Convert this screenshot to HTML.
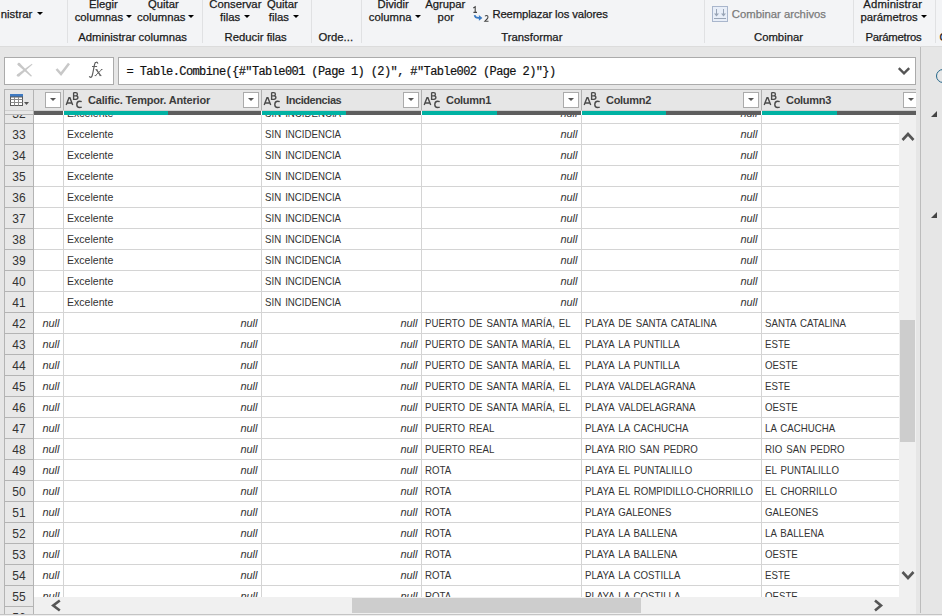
<!DOCTYPE html>
<html><head><meta charset="utf-8"><style>
html,body{margin:0;padding:0;}
body{width:942px;height:616px;overflow:hidden;position:relative;background:#e6e6e6;font-family:'Liberation Sans', sans-serif;}
body div, body svg{position:absolute;}
.t{white-space:nowrap;}
</style></head><body>
<div style="left:0px;top:0px;width:942px;height:46px;background:#f3f4f6;"></div><div style="left:0px;top:46px;width:942px;height:1px;background:#dcdcdc;"></div><div style="left:67px;top:0px;width:1px;height:43px;background:#e0e1e3;"></div><div style="left:202px;top:0px;width:1px;height:43px;background:#e0e1e3;"></div><div style="left:311px;top:0px;width:1px;height:43px;background:#e0e1e3;"></div><div style="left:361px;top:0px;width:1px;height:43px;background:#e0e1e3;"></div><div style="left:704px;top:0px;width:1px;height:43px;background:#e0e1e3;"></div><div style="left:853px;top:0px;width:1px;height:43px;background:#e0e1e3;"></div><div style="left:935px;top:0px;width:1px;height:43px;background:#e0e1e3;"></div><div class="t" style="left:0.8px;top:7.58px;font-size:11.3px;line-height:13px;color:#1a1a1a;font-weight:normal;font-style:normal;letter-spacing:0px;font-family:'Liberation Sans', sans-serif;-webkit-text-stroke:0.25px currentColor;">nistrar</div><div style="left:36.5px;top:12px;width:0;height:0;border-left:3.0px solid transparent;border-right:3.0px solid transparent;border-top:3px solid #000;"></div><div class="t" style="left:89px;top:-1.92px;font-size:11.3px;line-height:13px;color:#1a1a1a;font-weight:normal;font-style:normal;letter-spacing:0px;font-family:'Liberation Sans', sans-serif;-webkit-text-stroke:0.25px currentColor;">Elegir</div><div class="t" style="left:74.7px;top:11.08px;font-size:11.3px;line-height:13px;color:#1a1a1a;font-weight:normal;font-style:normal;letter-spacing:0px;font-family:'Liberation Sans', sans-serif;-webkit-text-stroke:0.25px currentColor;">columnas</div><div style="left:126px;top:15px;width:0;height:0;border-left:3.0px solid transparent;border-right:3.0px solid transparent;border-top:3px solid #000;"></div><div class="t" style="left:148px;top:-1.92px;font-size:11.3px;line-height:13px;color:#1a1a1a;font-weight:normal;font-style:normal;letter-spacing:0px;font-family:'Liberation Sans', sans-serif;-webkit-text-stroke:0.25px currentColor;">Quitar</div><div class="t" style="left:137px;top:11.08px;font-size:11.3px;line-height:13px;color:#1a1a1a;font-weight:normal;font-style:normal;letter-spacing:0px;font-family:'Liberation Sans', sans-serif;-webkit-text-stroke:0.25px currentColor;">columnas</div><div style="left:187.5px;top:15px;width:0;height:0;border-left:3.0px solid transparent;border-right:3.0px solid transparent;border-top:3px solid #000;"></div><div class="t" style="left:78.3px;top:31.08px;font-size:11.3px;line-height:13px;color:#1a1a1a;font-weight:normal;font-style:normal;letter-spacing:0px;font-family:'Liberation Sans', sans-serif;-webkit-text-stroke:0.25px currentColor;">Administrar columnas</div><div class="t" style="left:209.3px;top:-1.92px;font-size:11.3px;line-height:13px;color:#1a1a1a;font-weight:normal;font-style:normal;letter-spacing:0px;font-family:'Liberation Sans', sans-serif;-webkit-text-stroke:0.25px currentColor;">Conservar</div><div class="t" style="left:220px;top:11.08px;font-size:11.3px;line-height:13px;color:#1a1a1a;font-weight:normal;font-style:normal;letter-spacing:0px;font-family:'Liberation Sans', sans-serif;-webkit-text-stroke:0.25px currentColor;">filas</div><div style="left:244px;top:15px;width:0;height:0;border-left:3.0px solid transparent;border-right:3.0px solid transparent;border-top:3px solid #000;"></div><div class="t" style="left:267px;top:-1.92px;font-size:11.3px;line-height:13px;color:#1a1a1a;font-weight:normal;font-style:normal;letter-spacing:0px;font-family:'Liberation Sans', sans-serif;-webkit-text-stroke:0.25px currentColor;">Quitar</div><div class="t" style="left:268.8px;top:11.08px;font-size:11.3px;line-height:13px;color:#1a1a1a;font-weight:normal;font-style:normal;letter-spacing:0px;font-family:'Liberation Sans', sans-serif;-webkit-text-stroke:0.25px currentColor;">filas</div><div style="left:293px;top:15px;width:0;height:0;border-left:3.0px solid transparent;border-right:3.0px solid transparent;border-top:3px solid #000;"></div><div class="t" style="left:224.6px;top:31.08px;font-size:11.3px;line-height:13px;color:#1a1a1a;font-weight:normal;font-style:normal;letter-spacing:0px;font-family:'Liberation Sans', sans-serif;-webkit-text-stroke:0.25px currentColor;">Reducir filas</div><div class="t" style="left:318.5px;top:31.08px;font-size:11.3px;line-height:13px;color:#1a1a1a;font-weight:normal;font-style:normal;letter-spacing:0px;font-family:'Liberation Sans', sans-serif;-webkit-text-stroke:0.25px currentColor;">Orde...</div><div class="t" style="left:377.5px;top:-1.92px;font-size:11.3px;line-height:13px;color:#1a1a1a;font-weight:normal;font-style:normal;letter-spacing:0px;font-family:'Liberation Sans', sans-serif;-webkit-text-stroke:0.25px currentColor;">Dividir</div><div class="t" style="left:368.8px;top:11.08px;font-size:11.3px;line-height:13px;color:#1a1a1a;font-weight:normal;font-style:normal;letter-spacing:0px;font-family:'Liberation Sans', sans-serif;-webkit-text-stroke:0.25px currentColor;">columna</div><div style="left:415px;top:15px;width:0;height:0;border-left:3.0px solid transparent;border-right:3.0px solid transparent;border-top:3px solid #000;"></div><div class="t" style="left:425.2px;top:-1.92px;font-size:11.3px;line-height:13px;color:#1a1a1a;font-weight:normal;font-style:normal;letter-spacing:0px;font-family:'Liberation Sans', sans-serif;-webkit-text-stroke:0.25px currentColor;">Agrupar</div><div class="t" style="left:437.6px;top:11.08px;font-size:11.3px;line-height:13px;color:#1a1a1a;font-weight:normal;font-style:normal;letter-spacing:0px;font-family:'Liberation Sans', sans-serif;-webkit-text-stroke:0.25px currentColor;">por</div><svg style="left:468px;top:2px;width:26px;height:22px" width="26" height="22" viewBox="468 2 26 22" fill="none"><path d="M473.3 8 L475.2 6.7 V12.4 M473.4 12.4 H477" stroke="#444" stroke-width="1.1"/><path d="M485 16.3 Q485.6 15.5 486.5 15.5 Q488 15.5 488 17 Q488 18.2 486.6 19.5 L484.9 21.2 H488.5" stroke="#444" stroke-width="1.05"/><path d="M474.6 15.1 Q475.1 17.9 478.3 17.9 H479.6" stroke="#3b7bc4" stroke-width="1.7"/><path d="M478.9 15 L482.4 17.9 L478.9 20.8 Z" fill="#3b7bc4"/></svg><div class="t" style="left:492.4px;top:8.18px;font-size:11.3px;line-height:13px;color:#1a1a1a;font-weight:normal;font-style:normal;letter-spacing:-0.12px;font-family:'Liberation Sans', sans-serif;-webkit-text-stroke:0.25px currentColor;">Reemplazar los valores</div><div class="t" style="left:501.3px;top:31.08px;font-size:11.3px;line-height:13px;color:#1a1a1a;font-weight:normal;font-style:normal;letter-spacing:0px;font-family:'Liberation Sans', sans-serif;-webkit-text-stroke:0.25px currentColor;">Transformar</div><svg style="left:712px;top:6px;width:16px;height:16px" width="16" height="16" viewBox="0 0 16 16"><rect x="0.5" y="0.5" width="15" height="15" fill="#e8eef8" stroke="#a9b6cc"/><path d="M4.5 3 V8 M11.5 3 V8 M2 12.5 H14" stroke="#98a4b6" stroke-width="1" fill="none"/><path d="M2 7.5 H7 L4.5 10.5 Z M9 7.5 H14 L11.5 10.5 Z" fill="#98a4b6"/></svg><div class="t" style="left:731.8px;top:8.18px;font-size:11.3px;line-height:13px;color:#7a7a7a;font-weight:normal;font-style:normal;letter-spacing:0px;font-family:'Liberation Sans', sans-serif;-webkit-text-stroke:0.25px currentColor;">Combinar archivos</div><div class="t" style="left:754px;top:31.08px;font-size:11.3px;line-height:13px;color:#1a1a1a;font-weight:normal;font-style:normal;letter-spacing:0px;font-family:'Liberation Sans', sans-serif;-webkit-text-stroke:0.25px currentColor;">Combinar</div><div class="t" style="left:863.3px;top:-1.92px;font-size:11.3px;line-height:13px;color:#1a1a1a;font-weight:normal;font-style:normal;letter-spacing:0.15px;font-family:'Liberation Sans', sans-serif;-webkit-text-stroke:0.25px currentColor;">Administrar</div><div class="t" style="left:860.5px;top:11.08px;font-size:11.3px;line-height:13px;color:#1a1a1a;font-weight:normal;font-style:normal;letter-spacing:0px;font-family:'Liberation Sans', sans-serif;-webkit-text-stroke:0.25px currentColor;">parámetros</div><div style="left:921px;top:15px;width:0;height:0;border-left:3.0px solid transparent;border-right:3.0px solid transparent;border-top:3px solid #000;"></div><div class="t" style="left:865.5px;top:31.08px;font-size:11.3px;line-height:13px;color:#1a1a1a;font-weight:normal;font-style:normal;letter-spacing:-0.25px;font-family:'Liberation Sans', sans-serif;-webkit-text-stroke:0.25px currentColor;">Parámetros</div><div class="t" style="left:939.5px;top:31.08px;font-size:11.3px;line-height:13px;color:#1a1a1a;font-weight:normal;font-style:normal;letter-spacing:0px;font-family:'Liberation Sans', sans-serif;-webkit-text-stroke:0.25px currentColor;">C</div><div style="left:4px;top:57px;width:110px;height:28px;background:#fff;box-sizing:border-box;border:1px solid #ababab;"></div><svg style="left:14px;top:60px;width:24px;height:20px" width="24" height="20" viewBox="0 0 24 20"><path d="M3.93 5.21 L5.87 3.19 L17.91 15.77 L17.09 16.63 Z" fill="#c8c8c8"/><circle cx="4.9" cy="4.2" r="1.4" fill="#c8c8c8"/><path d="M5.07 16.40 L3.33 14.20 L17.89 3.81 L18.51 4.59 Z" fill="#c8c8c8"/><circle cx="4.2" cy="15.3" r="1.4" fill="#c8c8c8"/></svg><svg style="left:54px;top:62px;width:17px;height:15px" width="17" height="15" viewBox="0 0 17 15"><path d="M2.5 7 L7 12 L15 1.5" stroke="#c8c8c8" stroke-width="2.5" fill="none"/></svg><svg style="left:84px;top:58px;width:24px;height:24px" width="24" height="24" viewBox="84 58 24 24" fill="none" stroke="#5c5c5c"><path d="M97.9 63.6 Q97.4 61.9 96.3 62.1 Q95.0 62.3 94.5 64.6 L92.7 73.6 Q92.1 77.3 90.6 77.3 Q89.7 77.3 89.3 76.3" stroke-width="1.15"/><path d="M92 66.5 H97.1" stroke-width="0.95"/><path d="M96.4 69.6 L100.6 75.6" stroke-width="1.35"/><path d="M101.8 69.5 L95.4 75.6" stroke-width="0.9"/><path d="M95.4 69.6 H97.4 M99.5 75.6 H101.5 M94.6 75.6 H96.4 M100.9 69.5 H102.5" stroke-width="0.8"/></svg><div style="left:118px;top:57px;width:798px;height:28px;background:#fff;box-sizing:border-box;border:1px solid #ababab;"></div><div class="t" style="left:126.5px;top:65.74px;font-size:12px;line-height:13px;color:#111;font-weight:normal;font-style:normal;letter-spacing:-0.6px;font-family:'Liberation Mono', monospace;-webkit-text-stroke:0.2px currentColor;">= Table.Combine({#"Table001 (Page 1) (2)", #"Table002 (Page 2)"})</div><svg style="left:897px;top:66px;width:14px;height:10px" width="14" height="10" viewBox="0 0 14 10"><path d="M1.8 2.2 L7 7.4 L12.2 2.2" stroke="#555" stroke-width="2.4" fill="none"/></svg><div style="left:916px;top:47px;width:4px;height:569px;background:#e6e6e6;"></div><div style="left:920px;top:47px;width:1px;height:566px;background:#bcbcbc;"></div><div style="left:921px;top:47px;width:21px;height:569px;background:#e6e6e6;"></div><div style="left:936px;top:69px;width:14px;height:14px;box-sizing:border-box;border:1.6px solid #24668a;border-radius:50%"></div><svg style="left:930px;top:110px;width:8px;height:8px" width="8" height="8" viewBox="0 0 8 8"><path d="M7 1 V7 H1 Z" fill="#444"/></svg><svg style="left:930px;top:211px;width:8px;height:8px" width="8" height="8" viewBox="0 0 8 8"><path d="M7 1 V7 H1 Z" fill="#444"/></svg><div style="left:4px;top:89px;width:912px;height:525px;background:#ffffff;"></div><div style="left:5px;top:90px;width:911px;height:20px;background:#e6e6e6;"></div><div style="left:4px;top:89px;width:912px;height:1px;background:#b4b4b4;"></div><div style="left:4px;top:89px;width:1px;height:525px;background:#b4b4b4;"></div><div style="left:5px;top:110px;width:911px;height:1px;background:#cfcfcf;"></div><div style="left:5px;top:111px;width:28px;height:503px;background:#e8e8e8;"></div><div style="left:33px;top:89px;width:1px;height:525px;background:#b4b4b4;"></div><div style="left:63px;top:90px;width:1px;height:20px;background:#b0b0b0;"></div><div style="left:261px;top:90px;width:1px;height:20px;background:#b0b0b0;"></div><div style="left:421px;top:90px;width:1px;height:20px;background:#b0b0b0;"></div><div style="left:581px;top:90px;width:1px;height:20px;background:#b0b0b0;"></div><div style="left:761px;top:90px;width:1px;height:20px;background:#b0b0b0;"></div><div style="left:34px;top:111px;width:29px;height:4px;background:#5e5e5e;"></div><div style="left:64px;top:111px;width:104px;height:4px;background:#00b2a3;"></div><div style="left:168px;top:111px;width:93px;height:4px;background:#5e5e5e;"></div><div style="left:262px;top:111px;width:84px;height:4px;background:#00b2a3;"></div><div style="left:346px;top:111px;width:75px;height:4px;background:#5e5e5e;"></div><div style="left:422px;top:111px;width:75px;height:4px;background:#00b2a3;"></div><div style="left:497px;top:111px;width:84px;height:4px;background:#5e5e5e;"></div><div style="left:582px;top:111px;width:84px;height:4px;background:#00b2a3;"></div><div style="left:666px;top:111px;width:95px;height:4px;background:#5e5e5e;"></div><div style="left:762px;top:111px;width:75px;height:4px;background:#00b2a3;"></div><div style="left:837px;top:111px;width:79px;height:4px;background:#5e5e5e;"></div><div style="left:5px;top:114px;width:28px;height:1px;background:#b4b4b4;"></div><svg style="left:10px;top:94px;width:20px;height:12px" width="20" height="12" viewBox="0 0 20 12"><rect x="0" y="0" width="13" height="3" fill="#3f7ac2"/><rect x="0.5" y="3" width="12" height="8.5" fill="#fff" stroke="#5a5a5a" stroke-width="1"/><path d="M4.5 3 V11.5 M8.5 3 V11.5 M0.5 5.5 H12.5 M0.5 8.5 H12.5" stroke="#8a8a8a" stroke-width="1"/><path d="M14 8 L19 8 L16.5 11 Z" fill="#555"/></svg><div style="left:45px;top:92px;width:16px;height:16px;box-sizing:border-box;border:1px solid #ababab;background:#fff"></div><div style="left:50px;top:98px;width:0;height:0;border-left:3.5px solid transparent;border-right:3.5px solid transparent;border-top:3.5px solid #555;"></div><svg style="left:63px;top:90px;width:20px;height:19px" width="20" height="19" viewBox="0 0 20 19"><path d="M3.2 14.9 L6 7.8 H6.9 L9.7 14.9 M4.4 13 H8.5" stroke="#4a4a4a" stroke-width="1.4" fill="none"/><path d="M10.6 2.6 V9.3 H12.9 Q14.9 9.3 14.9 7.5 Q14.9 5.9 12.9 5.9 H10.6 M10.6 2.6 H12.7 Q14.4 2.6 14.4 4.2 Q14.4 5.9 12.7 5.9" stroke="#4a4a4a" stroke-width="1.35" fill="none"/><path d="M18.7 11.6 Q17.9 11.2 16.6 11.2 Q13.8 11.2 13.8 14.4 Q13.8 17.5 16.6 17.5 Q17.9 17.5 18.7 17.1" stroke="#4a4a4a" stroke-width="1.4" fill="none"/></svg><div class="t" style="left:88px;top:93.69px;font-size:11px;line-height:13px;color:#3c3c3c;font-weight:bold;font-style:normal;letter-spacing:-0.18px;font-family:'Liberation Sans', sans-serif;">Calific. Tempor. Anterior</div><div style="left:243px;top:92px;width:16px;height:16px;box-sizing:border-box;border:1px solid #ababab;background:#fff"></div><div style="left:248px;top:98px;width:0;height:0;border-left:3.5px solid transparent;border-right:3.5px solid transparent;border-top:3.5px solid #555;"></div><svg style="left:261px;top:90px;width:20px;height:19px" width="20" height="19" viewBox="0 0 20 19"><path d="M3.2 14.9 L6 7.8 H6.9 L9.7 14.9 M4.4 13 H8.5" stroke="#4a4a4a" stroke-width="1.4" fill="none"/><path d="M10.6 2.6 V9.3 H12.9 Q14.9 9.3 14.9 7.5 Q14.9 5.9 12.9 5.9 H10.6 M10.6 2.6 H12.7 Q14.4 2.6 14.4 4.2 Q14.4 5.9 12.7 5.9" stroke="#4a4a4a" stroke-width="1.35" fill="none"/><path d="M18.7 11.6 Q17.9 11.2 16.6 11.2 Q13.8 11.2 13.8 14.4 Q13.8 17.5 16.6 17.5 Q17.9 17.5 18.7 17.1" stroke="#4a4a4a" stroke-width="1.4" fill="none"/></svg><div class="t" style="left:286px;top:93.69px;font-size:11px;line-height:13px;color:#3c3c3c;font-weight:bold;font-style:normal;letter-spacing:-0.42px;font-family:'Liberation Sans', sans-serif;">Incidencias</div><div style="left:403px;top:92px;width:16px;height:16px;box-sizing:border-box;border:1px solid #ababab;background:#fff"></div><div style="left:408px;top:98px;width:0;height:0;border-left:3.5px solid transparent;border-right:3.5px solid transparent;border-top:3.5px solid #555;"></div><svg style="left:421px;top:90px;width:20px;height:19px" width="20" height="19" viewBox="0 0 20 19"><path d="M3.2 14.9 L6 7.8 H6.9 L9.7 14.9 M4.4 13 H8.5" stroke="#4a4a4a" stroke-width="1.4" fill="none"/><path d="M10.6 2.6 V9.3 H12.9 Q14.9 9.3 14.9 7.5 Q14.9 5.9 12.9 5.9 H10.6 M10.6 2.6 H12.7 Q14.4 2.6 14.4 4.2 Q14.4 5.9 12.7 5.9" stroke="#4a4a4a" stroke-width="1.35" fill="none"/><path d="M18.7 11.6 Q17.9 11.2 16.6 11.2 Q13.8 11.2 13.8 14.4 Q13.8 17.5 16.6 17.5 Q17.9 17.5 18.7 17.1" stroke="#4a4a4a" stroke-width="1.4" fill="none"/></svg><div class="t" style="left:446px;top:93.69px;font-size:11px;line-height:13px;color:#3c3c3c;font-weight:bold;font-style:normal;letter-spacing:-0.3px;font-family:'Liberation Sans', sans-serif;">Column1</div><div style="left:563px;top:92px;width:16px;height:16px;box-sizing:border-box;border:1px solid #ababab;background:#fff"></div><div style="left:568px;top:98px;width:0;height:0;border-left:3.5px solid transparent;border-right:3.5px solid transparent;border-top:3.5px solid #555;"></div><svg style="left:581px;top:90px;width:20px;height:19px" width="20" height="19" viewBox="0 0 20 19"><path d="M3.2 14.9 L6 7.8 H6.9 L9.7 14.9 M4.4 13 H8.5" stroke="#4a4a4a" stroke-width="1.4" fill="none"/><path d="M10.6 2.6 V9.3 H12.9 Q14.9 9.3 14.9 7.5 Q14.9 5.9 12.9 5.9 H10.6 M10.6 2.6 H12.7 Q14.4 2.6 14.4 4.2 Q14.4 5.9 12.7 5.9" stroke="#4a4a4a" stroke-width="1.35" fill="none"/><path d="M18.7 11.6 Q17.9 11.2 16.6 11.2 Q13.8 11.2 13.8 14.4 Q13.8 17.5 16.6 17.5 Q17.9 17.5 18.7 17.1" stroke="#4a4a4a" stroke-width="1.4" fill="none"/></svg><div class="t" style="left:606px;top:93.69px;font-size:11px;line-height:13px;color:#3c3c3c;font-weight:bold;font-style:normal;letter-spacing:-0.3px;font-family:'Liberation Sans', sans-serif;">Column2</div><div style="left:743px;top:92px;width:16px;height:16px;box-sizing:border-box;border:1px solid #ababab;background:#fff"></div><div style="left:748px;top:98px;width:0;height:0;border-left:3.5px solid transparent;border-right:3.5px solid transparent;border-top:3.5px solid #555;"></div><svg style="left:761px;top:90px;width:20px;height:19px" width="20" height="19" viewBox="0 0 20 19"><path d="M3.2 14.9 L6 7.8 H6.9 L9.7 14.9 M4.4 13 H8.5" stroke="#4a4a4a" stroke-width="1.4" fill="none"/><path d="M10.6 2.6 V9.3 H12.9 Q14.9 9.3 14.9 7.5 Q14.9 5.9 12.9 5.9 H10.6 M10.6 2.6 H12.7 Q14.4 2.6 14.4 4.2 Q14.4 5.9 12.7 5.9" stroke="#4a4a4a" stroke-width="1.35" fill="none"/><path d="M18.7 11.6 Q17.9 11.2 16.6 11.2 Q13.8 11.2 13.8 14.4 Q13.8 17.5 16.6 17.5 Q17.9 17.5 18.7 17.1" stroke="#4a4a4a" stroke-width="1.4" fill="none"/></svg><div class="t" style="left:786px;top:93.69px;font-size:11px;line-height:13px;color:#3c3c3c;font-weight:bold;font-style:normal;letter-spacing:-0.3px;font-family:'Liberation Sans', sans-serif;">Column3</div><div style="left:903px;top:92px;width:13px;height:16px;box-sizing:border-box;border:1px solid #ababab;border-right:none;background:#fff"></div><div style="left:908px;top:98px;width:0;height:0;border-left:3.5px solid transparent;border-right:3.5px solid transparent;border-top:3.5px solid #555;"></div><div style="left:5px;top:115px;width:28px;height:499px;overflow:hidden;background:#e8e8e8"><div style="left:0;top:-13px;width:28px;height:1px;background:#b4b4b4"></div><div class="t" style="left:0;top:-7.11px;width:28px;text-align:center;font-size:12px;line-height:13px;color:#333">32</div><div style="left:0;top:8px;width:28px;height:1px;background:#b4b4b4"></div><div class="t" style="left:0;top:13.89px;width:28px;text-align:center;font-size:12px;line-height:13px;color:#333">33</div><div style="left:0;top:29px;width:28px;height:1px;background:#b4b4b4"></div><div class="t" style="left:0;top:34.89px;width:28px;text-align:center;font-size:12px;line-height:13px;color:#333">34</div><div style="left:0;top:50px;width:28px;height:1px;background:#b4b4b4"></div><div class="t" style="left:0;top:55.89px;width:28px;text-align:center;font-size:12px;line-height:13px;color:#333">35</div><div style="left:0;top:71px;width:28px;height:1px;background:#b4b4b4"></div><div class="t" style="left:0;top:76.89px;width:28px;text-align:center;font-size:12px;line-height:13px;color:#333">36</div><div style="left:0;top:92px;width:28px;height:1px;background:#b4b4b4"></div><div class="t" style="left:0;top:97.89px;width:28px;text-align:center;font-size:12px;line-height:13px;color:#333">37</div><div style="left:0;top:113px;width:28px;height:1px;background:#b4b4b4"></div><div class="t" style="left:0;top:118.89px;width:28px;text-align:center;font-size:12px;line-height:13px;color:#333">38</div><div style="left:0;top:134px;width:28px;height:1px;background:#b4b4b4"></div><div class="t" style="left:0;top:139.89px;width:28px;text-align:center;font-size:12px;line-height:13px;color:#333">39</div><div style="left:0;top:155px;width:28px;height:1px;background:#b4b4b4"></div><div class="t" style="left:0;top:160.89px;width:28px;text-align:center;font-size:12px;line-height:13px;color:#333">40</div><div style="left:0;top:176px;width:28px;height:1px;background:#b4b4b4"></div><div class="t" style="left:0;top:181.89px;width:28px;text-align:center;font-size:12px;line-height:13px;color:#333">41</div><div style="left:0;top:197px;width:28px;height:1px;background:#b4b4b4"></div><div class="t" style="left:0;top:202.89px;width:28px;text-align:center;font-size:12px;line-height:13px;color:#333">42</div><div style="left:0;top:218px;width:28px;height:1px;background:#b4b4b4"></div><div class="t" style="left:0;top:223.89px;width:28px;text-align:center;font-size:12px;line-height:13px;color:#333">43</div><div style="left:0;top:239px;width:28px;height:1px;background:#b4b4b4"></div><div class="t" style="left:0;top:244.89px;width:28px;text-align:center;font-size:12px;line-height:13px;color:#333">44</div><div style="left:0;top:260px;width:28px;height:1px;background:#b4b4b4"></div><div class="t" style="left:0;top:265.89px;width:28px;text-align:center;font-size:12px;line-height:13px;color:#333">45</div><div style="left:0;top:281px;width:28px;height:1px;background:#b4b4b4"></div><div class="t" style="left:0;top:286.89px;width:28px;text-align:center;font-size:12px;line-height:13px;color:#333">46</div><div style="left:0;top:302px;width:28px;height:1px;background:#b4b4b4"></div><div class="t" style="left:0;top:307.89px;width:28px;text-align:center;font-size:12px;line-height:13px;color:#333">47</div><div style="left:0;top:323px;width:28px;height:1px;background:#b4b4b4"></div><div class="t" style="left:0;top:328.89px;width:28px;text-align:center;font-size:12px;line-height:13px;color:#333">48</div><div style="left:0;top:344px;width:28px;height:1px;background:#b4b4b4"></div><div class="t" style="left:0;top:349.89px;width:28px;text-align:center;font-size:12px;line-height:13px;color:#333">49</div><div style="left:0;top:365px;width:28px;height:1px;background:#b4b4b4"></div><div class="t" style="left:0;top:370.89px;width:28px;text-align:center;font-size:12px;line-height:13px;color:#333">50</div><div style="left:0;top:386px;width:28px;height:1px;background:#b4b4b4"></div><div class="t" style="left:0;top:391.89px;width:28px;text-align:center;font-size:12px;line-height:13px;color:#333">51</div><div style="left:0;top:407px;width:28px;height:1px;background:#b4b4b4"></div><div class="t" style="left:0;top:412.89px;width:28px;text-align:center;font-size:12px;line-height:13px;color:#333">52</div><div style="left:0;top:428px;width:28px;height:1px;background:#b4b4b4"></div><div class="t" style="left:0;top:433.89px;width:28px;text-align:center;font-size:12px;line-height:13px;color:#333">53</div><div style="left:0;top:449px;width:28px;height:1px;background:#b4b4b4"></div><div class="t" style="left:0;top:454.89px;width:28px;text-align:center;font-size:12px;line-height:13px;color:#333">54</div><div style="left:0;top:470px;width:28px;height:1px;background:#b4b4b4"></div><div class="t" style="left:0;top:475.89px;width:28px;text-align:center;font-size:12px;line-height:13px;color:#333">55</div><div style="left:0;top:491px;width:28px;height:1px;background:#b4b4b4"></div><div class="t" style="left:0;top:496.89px;width:28px;text-align:center;font-size:12px;line-height:13px;color:#333">56</div><div style="left:0;top:512px;width:28px;height:1px;background:#b4b4b4"></div><div class="t" style="left:0;top:517.89px;width:28px;text-align:center;font-size:12px;line-height:13px;color:#333">57</div></div><div style="left:34px;top:115px;width:882px;height:482px;overflow:hidden"><div style="left:0;top:-13px;width:882px;height:1px;background:#d4d4d4"></div><div class="t" style="left:33px;top:-8.31px;font-size:11px;line-height:13px;color:#333;transform:scaleX(0.96);transform-origin:0 0;word-spacing:0px;white-space:nowrap">Excelente</div><div class="t" style="left:231px;top:-8.31px;font-size:11px;line-height:13px;color:#333;transform:scaleX(0.88);transform-origin:0 0;word-spacing:1.5px;white-space:nowrap">SIN INCIDENCIA</div><div class="t" style="right:338.5px;top:-7.91px;font-size:11px;line-height:13px;color:#333;font-style:italic">null</div><div class="t" style="right:158.5px;top:-7.91px;font-size:11px;line-height:13px;color:#333;font-style:italic">null</div><div style="left:0;top:8px;width:882px;height:1px;background:#d4d4d4"></div><div class="t" style="left:33px;top:12.69px;font-size:11px;line-height:13px;color:#333;transform:scaleX(0.96);transform-origin:0 0;word-spacing:0px;white-space:nowrap">Excelente</div><div class="t" style="left:231px;top:12.69px;font-size:11px;line-height:13px;color:#333;transform:scaleX(0.88);transform-origin:0 0;word-spacing:1.5px;white-space:nowrap">SIN INCIDENCIA</div><div class="t" style="right:338.5px;top:13.09px;font-size:11px;line-height:13px;color:#333;font-style:italic">null</div><div class="t" style="right:158.5px;top:13.09px;font-size:11px;line-height:13px;color:#333;font-style:italic">null</div><div style="left:0;top:29px;width:882px;height:1px;background:#d4d4d4"></div><div class="t" style="left:33px;top:33.69px;font-size:11px;line-height:13px;color:#333;transform:scaleX(0.96);transform-origin:0 0;word-spacing:0px;white-space:nowrap">Excelente</div><div class="t" style="left:231px;top:33.69px;font-size:11px;line-height:13px;color:#333;transform:scaleX(0.88);transform-origin:0 0;word-spacing:1.5px;white-space:nowrap">SIN INCIDENCIA</div><div class="t" style="right:338.5px;top:34.09px;font-size:11px;line-height:13px;color:#333;font-style:italic">null</div><div class="t" style="right:158.5px;top:34.09px;font-size:11px;line-height:13px;color:#333;font-style:italic">null</div><div style="left:0;top:50px;width:882px;height:1px;background:#d4d4d4"></div><div class="t" style="left:33px;top:54.69px;font-size:11px;line-height:13px;color:#333;transform:scaleX(0.96);transform-origin:0 0;word-spacing:0px;white-space:nowrap">Excelente</div><div class="t" style="left:231px;top:54.69px;font-size:11px;line-height:13px;color:#333;transform:scaleX(0.88);transform-origin:0 0;word-spacing:1.5px;white-space:nowrap">SIN INCIDENCIA</div><div class="t" style="right:338.5px;top:55.09px;font-size:11px;line-height:13px;color:#333;font-style:italic">null</div><div class="t" style="right:158.5px;top:55.09px;font-size:11px;line-height:13px;color:#333;font-style:italic">null</div><div style="left:0;top:71px;width:882px;height:1px;background:#d4d4d4"></div><div class="t" style="left:33px;top:75.69px;font-size:11px;line-height:13px;color:#333;transform:scaleX(0.96);transform-origin:0 0;word-spacing:0px;white-space:nowrap">Excelente</div><div class="t" style="left:231px;top:75.69px;font-size:11px;line-height:13px;color:#333;transform:scaleX(0.88);transform-origin:0 0;word-spacing:1.5px;white-space:nowrap">SIN INCIDENCIA</div><div class="t" style="right:338.5px;top:76.09px;font-size:11px;line-height:13px;color:#333;font-style:italic">null</div><div class="t" style="right:158.5px;top:76.09px;font-size:11px;line-height:13px;color:#333;font-style:italic">null</div><div style="left:0;top:92px;width:882px;height:1px;background:#d4d4d4"></div><div class="t" style="left:33px;top:96.69px;font-size:11px;line-height:13px;color:#333;transform:scaleX(0.96);transform-origin:0 0;word-spacing:0px;white-space:nowrap">Excelente</div><div class="t" style="left:231px;top:96.69px;font-size:11px;line-height:13px;color:#333;transform:scaleX(0.88);transform-origin:0 0;word-spacing:1.5px;white-space:nowrap">SIN INCIDENCIA</div><div class="t" style="right:338.5px;top:97.09px;font-size:11px;line-height:13px;color:#333;font-style:italic">null</div><div class="t" style="right:158.5px;top:97.09px;font-size:11px;line-height:13px;color:#333;font-style:italic">null</div><div style="left:0;top:113px;width:882px;height:1px;background:#d4d4d4"></div><div class="t" style="left:33px;top:117.69px;font-size:11px;line-height:13px;color:#333;transform:scaleX(0.96);transform-origin:0 0;word-spacing:0px;white-space:nowrap">Excelente</div><div class="t" style="left:231px;top:117.69px;font-size:11px;line-height:13px;color:#333;transform:scaleX(0.88);transform-origin:0 0;word-spacing:1.5px;white-space:nowrap">SIN INCIDENCIA</div><div class="t" style="right:338.5px;top:118.09px;font-size:11px;line-height:13px;color:#333;font-style:italic">null</div><div class="t" style="right:158.5px;top:118.09px;font-size:11px;line-height:13px;color:#333;font-style:italic">null</div><div style="left:0;top:134px;width:882px;height:1px;background:#d4d4d4"></div><div class="t" style="left:33px;top:138.69px;font-size:11px;line-height:13px;color:#333;transform:scaleX(0.96);transform-origin:0 0;word-spacing:0px;white-space:nowrap">Excelente</div><div class="t" style="left:231px;top:138.69px;font-size:11px;line-height:13px;color:#333;transform:scaleX(0.88);transform-origin:0 0;word-spacing:1.5px;white-space:nowrap">SIN INCIDENCIA</div><div class="t" style="right:338.5px;top:139.09px;font-size:11px;line-height:13px;color:#333;font-style:italic">null</div><div class="t" style="right:158.5px;top:139.09px;font-size:11px;line-height:13px;color:#333;font-style:italic">null</div><div style="left:0;top:155px;width:882px;height:1px;background:#d4d4d4"></div><div class="t" style="left:33px;top:159.69px;font-size:11px;line-height:13px;color:#333;transform:scaleX(0.96);transform-origin:0 0;word-spacing:0px;white-space:nowrap">Excelente</div><div class="t" style="left:231px;top:159.69px;font-size:11px;line-height:13px;color:#333;transform:scaleX(0.88);transform-origin:0 0;word-spacing:1.5px;white-space:nowrap">SIN INCIDENCIA</div><div class="t" style="right:338.5px;top:160.09px;font-size:11px;line-height:13px;color:#333;font-style:italic">null</div><div class="t" style="right:158.5px;top:160.09px;font-size:11px;line-height:13px;color:#333;font-style:italic">null</div><div style="left:0;top:176px;width:882px;height:1px;background:#d4d4d4"></div><div class="t" style="left:33px;top:180.69px;font-size:11px;line-height:13px;color:#333;transform:scaleX(0.96);transform-origin:0 0;word-spacing:0px;white-space:nowrap">Excelente</div><div class="t" style="left:231px;top:180.69px;font-size:11px;line-height:13px;color:#333;transform:scaleX(0.88);transform-origin:0 0;word-spacing:1.5px;white-space:nowrap">SIN INCIDENCIA</div><div class="t" style="right:338.5px;top:181.09px;font-size:11px;line-height:13px;color:#333;font-style:italic">null</div><div class="t" style="right:158.5px;top:181.09px;font-size:11px;line-height:13px;color:#333;font-style:italic">null</div><div style="left:0;top:197px;width:882px;height:1px;background:#d4d4d4"></div><div class="t" style="right:856.5px;top:202.09px;font-size:11px;line-height:13px;color:#333;font-style:italic">null</div><div class="t" style="right:658.5px;top:202.09px;font-size:11px;line-height:13px;color:#333;font-style:italic">null</div><div class="t" style="right:498.5px;top:202.09px;font-size:11px;line-height:13px;color:#333;font-style:italic">null</div><div class="t" style="left:391px;top:201.69px;font-size:11px;line-height:13px;color:#333;transform:scaleX(0.88);transform-origin:0 0;word-spacing:1.5px;white-space:nowrap">PUERTO DE SANTA MARÍA, EL</div><div class="t" style="left:551px;top:201.69px;font-size:11px;line-height:13px;color:#333;transform:scaleX(0.88);transform-origin:0 0;word-spacing:1.5px;white-space:nowrap">PLAYA DE SANTA CATALINA</div><div class="t" style="left:731px;top:201.69px;font-size:11px;line-height:13px;color:#333;transform:scaleX(0.88);transform-origin:0 0;word-spacing:1.5px;white-space:nowrap">SANTA CATALINA</div><div style="left:0;top:218px;width:882px;height:1px;background:#d4d4d4"></div><div class="t" style="right:856.5px;top:223.09px;font-size:11px;line-height:13px;color:#333;font-style:italic">null</div><div class="t" style="right:658.5px;top:223.09px;font-size:11px;line-height:13px;color:#333;font-style:italic">null</div><div class="t" style="right:498.5px;top:223.09px;font-size:11px;line-height:13px;color:#333;font-style:italic">null</div><div class="t" style="left:391px;top:222.69px;font-size:11px;line-height:13px;color:#333;transform:scaleX(0.88);transform-origin:0 0;word-spacing:1.5px;white-space:nowrap">PUERTO DE SANTA MARÍA, EL</div><div class="t" style="left:551px;top:222.69px;font-size:11px;line-height:13px;color:#333;transform:scaleX(0.88);transform-origin:0 0;word-spacing:1.5px;white-space:nowrap">PLAYA LA PUNTILLA</div><div class="t" style="left:731px;top:222.69px;font-size:11px;line-height:13px;color:#333;transform:scaleX(0.88);transform-origin:0 0;word-spacing:1.5px;white-space:nowrap">ESTE</div><div style="left:0;top:239px;width:882px;height:1px;background:#d4d4d4"></div><div class="t" style="right:856.5px;top:244.09px;font-size:11px;line-height:13px;color:#333;font-style:italic">null</div><div class="t" style="right:658.5px;top:244.09px;font-size:11px;line-height:13px;color:#333;font-style:italic">null</div><div class="t" style="right:498.5px;top:244.09px;font-size:11px;line-height:13px;color:#333;font-style:italic">null</div><div class="t" style="left:391px;top:243.69px;font-size:11px;line-height:13px;color:#333;transform:scaleX(0.88);transform-origin:0 0;word-spacing:1.5px;white-space:nowrap">PUERTO DE SANTA MARÍA, EL</div><div class="t" style="left:551px;top:243.69px;font-size:11px;line-height:13px;color:#333;transform:scaleX(0.88);transform-origin:0 0;word-spacing:1.5px;white-space:nowrap">PLAYA LA PUNTILLA</div><div class="t" style="left:731px;top:243.69px;font-size:11px;line-height:13px;color:#333;transform:scaleX(0.88);transform-origin:0 0;word-spacing:1.5px;white-space:nowrap">OESTE</div><div style="left:0;top:260px;width:882px;height:1px;background:#d4d4d4"></div><div class="t" style="right:856.5px;top:265.09px;font-size:11px;line-height:13px;color:#333;font-style:italic">null</div><div class="t" style="right:658.5px;top:265.09px;font-size:11px;line-height:13px;color:#333;font-style:italic">null</div><div class="t" style="right:498.5px;top:265.09px;font-size:11px;line-height:13px;color:#333;font-style:italic">null</div><div class="t" style="left:391px;top:264.69px;font-size:11px;line-height:13px;color:#333;transform:scaleX(0.88);transform-origin:0 0;word-spacing:1.5px;white-space:nowrap">PUERTO DE SANTA MARÍA, EL</div><div class="t" style="left:551px;top:264.69px;font-size:11px;line-height:13px;color:#333;transform:scaleX(0.88);transform-origin:0 0;word-spacing:1.5px;white-space:nowrap">PLAYA VALDELAGRANA</div><div class="t" style="left:731px;top:264.69px;font-size:11px;line-height:13px;color:#333;transform:scaleX(0.88);transform-origin:0 0;word-spacing:1.5px;white-space:nowrap">ESTE</div><div style="left:0;top:281px;width:882px;height:1px;background:#d4d4d4"></div><div class="t" style="right:856.5px;top:286.09px;font-size:11px;line-height:13px;color:#333;font-style:italic">null</div><div class="t" style="right:658.5px;top:286.09px;font-size:11px;line-height:13px;color:#333;font-style:italic">null</div><div class="t" style="right:498.5px;top:286.09px;font-size:11px;line-height:13px;color:#333;font-style:italic">null</div><div class="t" style="left:391px;top:285.69px;font-size:11px;line-height:13px;color:#333;transform:scaleX(0.88);transform-origin:0 0;word-spacing:1.5px;white-space:nowrap">PUERTO DE SANTA MARÍA, EL</div><div class="t" style="left:551px;top:285.69px;font-size:11px;line-height:13px;color:#333;transform:scaleX(0.88);transform-origin:0 0;word-spacing:1.5px;white-space:nowrap">PLAYA VALDELAGRANA</div><div class="t" style="left:731px;top:285.69px;font-size:11px;line-height:13px;color:#333;transform:scaleX(0.88);transform-origin:0 0;word-spacing:1.5px;white-space:nowrap">OESTE</div><div style="left:0;top:302px;width:882px;height:1px;background:#d4d4d4"></div><div class="t" style="right:856.5px;top:307.09px;font-size:11px;line-height:13px;color:#333;font-style:italic">null</div><div class="t" style="right:658.5px;top:307.09px;font-size:11px;line-height:13px;color:#333;font-style:italic">null</div><div class="t" style="right:498.5px;top:307.09px;font-size:11px;line-height:13px;color:#333;font-style:italic">null</div><div class="t" style="left:391px;top:306.69px;font-size:11px;line-height:13px;color:#333;transform:scaleX(0.88);transform-origin:0 0;word-spacing:1.5px;white-space:nowrap">PUERTO REAL</div><div class="t" style="left:551px;top:306.69px;font-size:11px;line-height:13px;color:#333;transform:scaleX(0.88);transform-origin:0 0;word-spacing:1.5px;white-space:nowrap">PLAYA LA CACHUCHA</div><div class="t" style="left:731px;top:306.69px;font-size:11px;line-height:13px;color:#333;transform:scaleX(0.88);transform-origin:0 0;word-spacing:1.5px;white-space:nowrap">LA CACHUCHA</div><div style="left:0;top:323px;width:882px;height:1px;background:#d4d4d4"></div><div class="t" style="right:856.5px;top:328.09px;font-size:11px;line-height:13px;color:#333;font-style:italic">null</div><div class="t" style="right:658.5px;top:328.09px;font-size:11px;line-height:13px;color:#333;font-style:italic">null</div><div class="t" style="right:498.5px;top:328.09px;font-size:11px;line-height:13px;color:#333;font-style:italic">null</div><div class="t" style="left:391px;top:327.69px;font-size:11px;line-height:13px;color:#333;transform:scaleX(0.88);transform-origin:0 0;word-spacing:1.5px;white-space:nowrap">PUERTO REAL</div><div class="t" style="left:551px;top:327.69px;font-size:11px;line-height:13px;color:#333;transform:scaleX(0.88);transform-origin:0 0;word-spacing:1.5px;white-space:nowrap">PLAYA RIO SAN PEDRO</div><div class="t" style="left:731px;top:327.69px;font-size:11px;line-height:13px;color:#333;transform:scaleX(0.88);transform-origin:0 0;word-spacing:1.5px;white-space:nowrap">RIO SAN PEDRO</div><div style="left:0;top:344px;width:882px;height:1px;background:#d4d4d4"></div><div class="t" style="right:856.5px;top:349.09px;font-size:11px;line-height:13px;color:#333;font-style:italic">null</div><div class="t" style="right:658.5px;top:349.09px;font-size:11px;line-height:13px;color:#333;font-style:italic">null</div><div class="t" style="right:498.5px;top:349.09px;font-size:11px;line-height:13px;color:#333;font-style:italic">null</div><div class="t" style="left:391px;top:348.69px;font-size:11px;line-height:13px;color:#333;transform:scaleX(0.88);transform-origin:0 0;word-spacing:1.5px;white-space:nowrap">ROTA</div><div class="t" style="left:551px;top:348.69px;font-size:11px;line-height:13px;color:#333;transform:scaleX(0.88);transform-origin:0 0;word-spacing:1.5px;white-space:nowrap">PLAYA EL PUNTALILLO</div><div class="t" style="left:731px;top:348.69px;font-size:11px;line-height:13px;color:#333;transform:scaleX(0.88);transform-origin:0 0;word-spacing:1.5px;white-space:nowrap">EL PUNTALILLO</div><div style="left:0;top:365px;width:882px;height:1px;background:#d4d4d4"></div><div class="t" style="right:856.5px;top:370.09px;font-size:11px;line-height:13px;color:#333;font-style:italic">null</div><div class="t" style="right:658.5px;top:370.09px;font-size:11px;line-height:13px;color:#333;font-style:italic">null</div><div class="t" style="right:498.5px;top:370.09px;font-size:11px;line-height:13px;color:#333;font-style:italic">null</div><div class="t" style="left:391px;top:369.69px;font-size:11px;line-height:13px;color:#333;transform:scaleX(0.88);transform-origin:0 0;word-spacing:1.5px;white-space:nowrap">ROTA</div><div class="t" style="left:551px;top:369.69px;font-size:11px;line-height:13px;color:#333;transform:scaleX(0.88);transform-origin:0 0;word-spacing:1.5px;white-space:nowrap">PLAYA EL ROMPIDILLO-CHORRILLO</div><div class="t" style="left:731px;top:369.69px;font-size:11px;line-height:13px;color:#333;transform:scaleX(0.88);transform-origin:0 0;word-spacing:1.5px;white-space:nowrap">EL CHORRILLO</div><div style="left:0;top:386px;width:882px;height:1px;background:#d4d4d4"></div><div class="t" style="right:856.5px;top:391.09px;font-size:11px;line-height:13px;color:#333;font-style:italic">null</div><div class="t" style="right:658.5px;top:391.09px;font-size:11px;line-height:13px;color:#333;font-style:italic">null</div><div class="t" style="right:498.5px;top:391.09px;font-size:11px;line-height:13px;color:#333;font-style:italic">null</div><div class="t" style="left:391px;top:390.69px;font-size:11px;line-height:13px;color:#333;transform:scaleX(0.88);transform-origin:0 0;word-spacing:1.5px;white-space:nowrap">ROTA</div><div class="t" style="left:551px;top:390.69px;font-size:11px;line-height:13px;color:#333;transform:scaleX(0.88);transform-origin:0 0;word-spacing:1.5px;white-space:nowrap">PLAYA GALEONES</div><div class="t" style="left:731px;top:390.69px;font-size:11px;line-height:13px;color:#333;transform:scaleX(0.88);transform-origin:0 0;word-spacing:1.5px;white-space:nowrap">GALEONES</div><div style="left:0;top:407px;width:882px;height:1px;background:#d4d4d4"></div><div class="t" style="right:856.5px;top:412.09px;font-size:11px;line-height:13px;color:#333;font-style:italic">null</div><div class="t" style="right:658.5px;top:412.09px;font-size:11px;line-height:13px;color:#333;font-style:italic">null</div><div class="t" style="right:498.5px;top:412.09px;font-size:11px;line-height:13px;color:#333;font-style:italic">null</div><div class="t" style="left:391px;top:411.69px;font-size:11px;line-height:13px;color:#333;transform:scaleX(0.88);transform-origin:0 0;word-spacing:1.5px;white-space:nowrap">ROTA</div><div class="t" style="left:551px;top:411.69px;font-size:11px;line-height:13px;color:#333;transform:scaleX(0.88);transform-origin:0 0;word-spacing:1.5px;white-space:nowrap">PLAYA LA BALLENA</div><div class="t" style="left:731px;top:411.69px;font-size:11px;line-height:13px;color:#333;transform:scaleX(0.88);transform-origin:0 0;word-spacing:1.5px;white-space:nowrap">LA BALLENA</div><div style="left:0;top:428px;width:882px;height:1px;background:#d4d4d4"></div><div class="t" style="right:856.5px;top:433.09px;font-size:11px;line-height:13px;color:#333;font-style:italic">null</div><div class="t" style="right:658.5px;top:433.09px;font-size:11px;line-height:13px;color:#333;font-style:italic">null</div><div class="t" style="right:498.5px;top:433.09px;font-size:11px;line-height:13px;color:#333;font-style:italic">null</div><div class="t" style="left:391px;top:432.69px;font-size:11px;line-height:13px;color:#333;transform:scaleX(0.88);transform-origin:0 0;word-spacing:1.5px;white-space:nowrap">ROTA</div><div class="t" style="left:551px;top:432.69px;font-size:11px;line-height:13px;color:#333;transform:scaleX(0.88);transform-origin:0 0;word-spacing:1.5px;white-space:nowrap">PLAYA LA BALLENA</div><div class="t" style="left:731px;top:432.69px;font-size:11px;line-height:13px;color:#333;transform:scaleX(0.88);transform-origin:0 0;word-spacing:1.5px;white-space:nowrap">OESTE</div><div style="left:0;top:449px;width:882px;height:1px;background:#d4d4d4"></div><div class="t" style="right:856.5px;top:454.09px;font-size:11px;line-height:13px;color:#333;font-style:italic">null</div><div class="t" style="right:658.5px;top:454.09px;font-size:11px;line-height:13px;color:#333;font-style:italic">null</div><div class="t" style="right:498.5px;top:454.09px;font-size:11px;line-height:13px;color:#333;font-style:italic">null</div><div class="t" style="left:391px;top:453.69px;font-size:11px;line-height:13px;color:#333;transform:scaleX(0.88);transform-origin:0 0;word-spacing:1.5px;white-space:nowrap">ROTA</div><div class="t" style="left:551px;top:453.69px;font-size:11px;line-height:13px;color:#333;transform:scaleX(0.88);transform-origin:0 0;word-spacing:1.5px;white-space:nowrap">PLAYA LA COSTILLA</div><div class="t" style="left:731px;top:453.69px;font-size:11px;line-height:13px;color:#333;transform:scaleX(0.88);transform-origin:0 0;word-spacing:1.5px;white-space:nowrap">ESTE</div><div style="left:0;top:470px;width:882px;height:1px;background:#d4d4d4"></div><div class="t" style="right:856.5px;top:475.09px;font-size:11px;line-height:13px;color:#333;font-style:italic">null</div><div class="t" style="right:658.5px;top:475.09px;font-size:11px;line-height:13px;color:#333;font-style:italic">null</div><div class="t" style="right:498.5px;top:475.09px;font-size:11px;line-height:13px;color:#333;font-style:italic">null</div><div class="t" style="left:391px;top:474.69px;font-size:11px;line-height:13px;color:#333;transform:scaleX(0.88);transform-origin:0 0;word-spacing:1.5px;white-space:nowrap">ROTA</div><div class="t" style="left:551px;top:474.69px;font-size:11px;line-height:13px;color:#333;transform:scaleX(0.88);transform-origin:0 0;word-spacing:1.5px;white-space:nowrap">PLAYA LA COSTILLA</div><div class="t" style="left:731px;top:474.69px;font-size:11px;line-height:13px;color:#333;transform:scaleX(0.88);transform-origin:0 0;word-spacing:1.5px;white-space:nowrap">OESTE</div><div style="left:0;top:491px;width:882px;height:1px;background:#d4d4d4"></div><div class="t" style="right:856.5px;top:496.09px;font-size:11px;line-height:13px;color:#333;font-style:italic">null</div><div class="t" style="right:658.5px;top:496.09px;font-size:11px;line-height:13px;color:#333;font-style:italic">null</div><div class="t" style="right:498.5px;top:496.09px;font-size:11px;line-height:13px;color:#333;font-style:italic">null</div><div class="t" style="left:391px;top:495.69px;font-size:11px;line-height:13px;color:#333;transform:scaleX(0.88);transform-origin:0 0;word-spacing:1.5px;white-space:nowrap">ROTA</div><div class="t" style="left:551px;top:495.69px;font-size:11px;line-height:13px;color:#333;transform:scaleX(0.88);transform-origin:0 0;word-spacing:1.5px;white-space:nowrap">PLAYA LA COSTILLA</div><div class="t" style="left:731px;top:495.69px;font-size:11px;line-height:13px;color:#333;transform:scaleX(0.88);transform-origin:0 0;word-spacing:1.5px;white-space:nowrap">ESTE</div></div><div style="left:63px;top:115px;width:1px;height:482px;background:#d4d4d4;"></div><div style="left:261px;top:115px;width:1px;height:482px;background:#d4d4d4;"></div><div style="left:421px;top:115px;width:1px;height:482px;background:#d4d4d4;"></div><div style="left:581px;top:115px;width:1px;height:482px;background:#d4d4d4;"></div><div style="left:761px;top:115px;width:1px;height:482px;background:#d4d4d4;"></div><div style="left:899px;top:115px;width:17px;height:482px;background:#f0f0f0;"></div><div style="left:900px;top:320px;width:15px;height:122px;background:#cdcdcd;"></div><svg style="left:901px;top:131px;width:14px;height:11px" width="14" height="11" viewBox="0 0 14 11"><path d="M1.5 9 L7 3 L12.5 9" stroke="#555" stroke-width="2.6" fill="none"/></svg><svg style="left:901px;top:570px;width:14px;height:11px" width="14" height="11" viewBox="0 0 14 11"><path d="M1.5 2 L7 8 L12.5 2" stroke="#555" stroke-width="2.6" fill="none"/></svg><div style="left:34px;top:597px;width:882px;height:17px;background:#f0f0f0;"></div><div style="left:352px;top:598px;width:289px;height:15px;background:#cdcdcd;"></div><svg style="left:50px;top:599px;width:12px;height:13px" width="12" height="13" viewBox="0 0 12 13"><path d="M9.8 1.5 L3.2 6.5 L9.8 11.5" stroke="#555" stroke-width="2.6" fill="none"/></svg><svg style="left:872px;top:599px;width:12px;height:13px" width="12" height="13" viewBox="0 0 12 13"><path d="M3 1.5 L9 6.5 L3 11.5" stroke="#555" stroke-width="2.6" fill="none"/></svg><div style="left:0px;top:614px;width:942px;height:1px;background:#c4c4c4;"></div><div style="left:0px;top:615px;width:942px;height:1px;background:#eeeeee;"></div>
</body></html>
